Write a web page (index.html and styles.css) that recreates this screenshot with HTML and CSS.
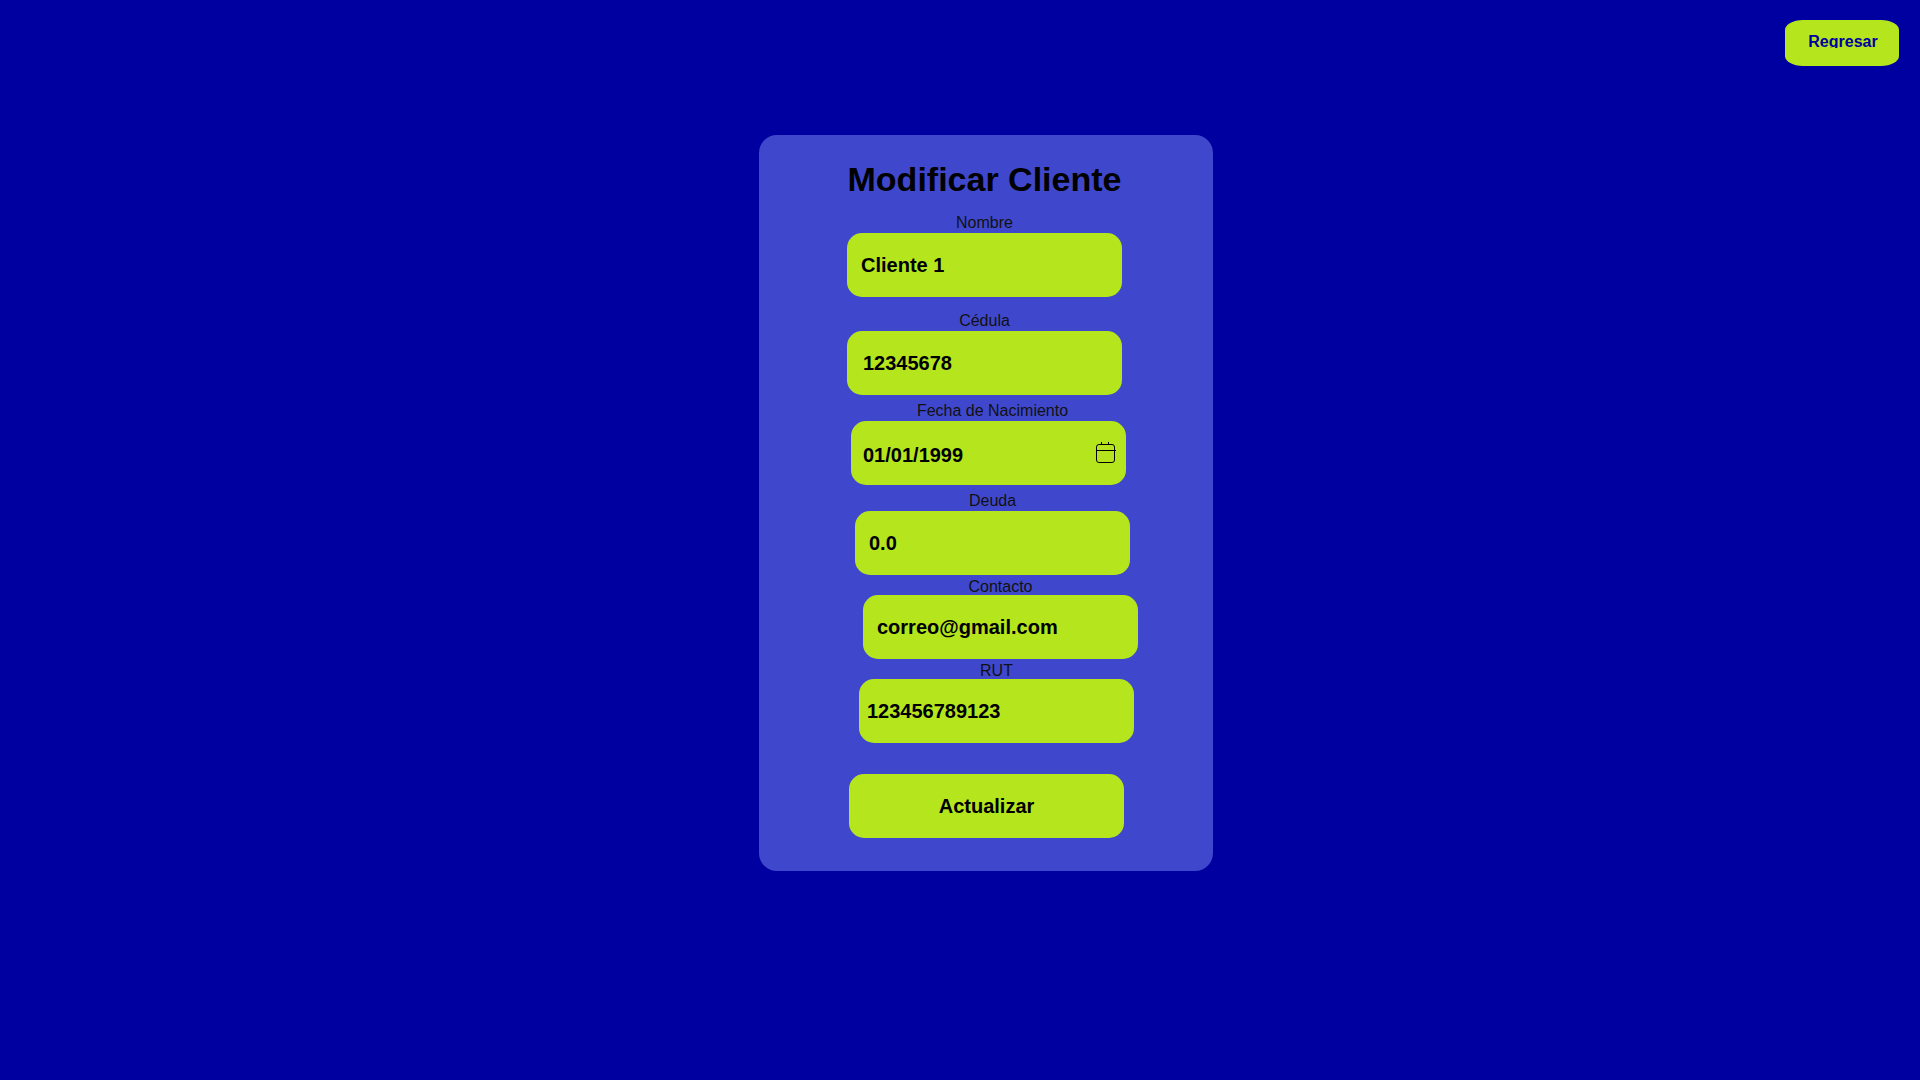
FILE: index.html
```html
<!DOCTYPE html>
<html lang="es">
<head>
  <meta charset="utf-8">
  <meta name="viewport" content="width=device-width, initial-scale=1">
  <title>Modificar Cliente</title>
  <link rel="stylesheet" href="styles.css">
</head>
<body>
  <header class="topbar">
    <button class="back" type="button"><span class="back-text">Regresar</span></button>
  </header>
  <main class="page">
    <form class="card">
      <h1 class="title">Modificar Cliente</h1>
      <div class="field">
        <label class="label" for="nombre">Nombre</label>
        <input class="input" id="nombre" type="text" value="Cliente 1">
      </div>
      <div class="field gap-large">
        <label class="label" for="cedula">Cédula</label>
        <input class="input input-wide" id="cedula" type="text" value="12345678">
      </div>
      <div class="field gap-medium step-1">
        <label class="label label-date" for="fecha">Fecha de Nacimiento</label>
        <div class="date">
          <input class="input input-date" id="fecha" type="date" value="1999-01-01">
          <svg class="calendar" width="20" height="21" viewBox="0 0 20 21" fill="none" stroke="#000" aria-hidden="true">
            <rect x="0.5" y="2.5" width="18" height="18" rx="2.5"/>
            <path d="M0 8.5H20M5.5 0V2M12.5 0V2"/>
          </svg>
        </div>
      </div>
      <div class="field gap-medium step-2">
        <label class="label" for="deuda">Deuda</label>
        <input class="input" id="deuda" type="text" inputmode="decimal" value="0.0">
      </div>
      <div class="field gap-small step-4">
        <label class="label" for="contacto">Contacto</label>
        <input class="input" id="contacto" type="email" value="correo@gmail.com">
      </div>
      <div class="field gap-small step-3">
        <label class="label" for="rut">RUT</label>
        <input class="input input-tight" id="rut" type="text" value="123456789123">
      </div>
      <button class="submit" type="submit">Actualizar</button>
    </form>
  </main>
</body>
</html>
```
FILE: styles.css
```css
* {
  box-sizing: border-box;
}

body {
  margin: 0;
  min-height: 100vh;
  background: #0000a0;
  color: #000;
  font-family: "Liberation Sans", Arial, sans-serif;
}

.topbar {
  display: flex;
  justify-content: flex-end;
  padding: 20px 21px 0;
}

.back {
  width: 114px;
  height: 46px;
  padding: 0 0 5px 2px;
  border: 0;
  border-radius: 18px / 10px;
  background: #b5e61d;
  color: #0000a0;
  font: bold 16px/16px "Liberation Sans", Arial, sans-serif;
}

/* the label box ends at the baseline */
.back-text {
  display: block;
  height: 14px;
  overflow: hidden;
}

.page {
  display: flex;
  justify-content: center;
  padding: 69px 0 32px 52px;
}

.card {
  display: flex;
  flex-direction: column;
  width: 100%;
  max-width: 454px;
  padding: 24px 0 33px 88px;
  border-radius: 18px;
  background: #3f48cc;
}

.title {
  width: 275px;
  margin: 0 0 14px;
  font-size: 34px;
  line-height: 40px;
  text-align: center;
  white-space: nowrap;
}

.field {
  display: flex;
  flex-direction: column;
  width: 275px;
}

.label {
  color: #111;
  font-size: 16px;
  line-height: 20px;
  text-align: center;
}

.label-date { padding-left: 8px; }

.gap-large { margin-top: 14px; }
.gap-medium { margin-top: 6px; }
.gap-small { margin-top: 4px; }
.gap-small .label { line-height: 16px; }

/* staggered indents */
.step-1 { margin-left: 4px; }
.step-2 { margin-left: 8px; }
.step-3 { margin-left: 12px; }
.step-4 { margin-left: 16px; }

.input,
.submit {
  width: 275px;
  height: 64px;
  border: 0;
  border-radius: 15px;
  background: #b5e61d;
  color: #000;
  font: bold 20px/24px "Liberation Sans", Arial, sans-serif;
}

.input {
  display: block;
  padding: 0 14px;
}

.input-wide { padding-left: 16px; }
.input-date { padding: 4px 12px 0; }
.input-tight { padding-left: 8px; }

.input-date::-webkit-datetime-edit,
.input-date::-webkit-datetime-edit-fields-wrapper,
.input-date::-webkit-datetime-edit-month-field,
.input-date::-webkit-datetime-edit-day-field,
.input-date::-webkit-datetime-edit-year-field {
  padding: 0;
}

.input-date::-webkit-calendar-picker-indicator {
  opacity: 0;
}

.date {
  position: relative;
}

.calendar {
  position: absolute;
  top: 21px;
  right: 10px;
  pointer-events: none;
}

.submit {
  margin: 31px 0 0 2px;
  padding: 0;
}
```
